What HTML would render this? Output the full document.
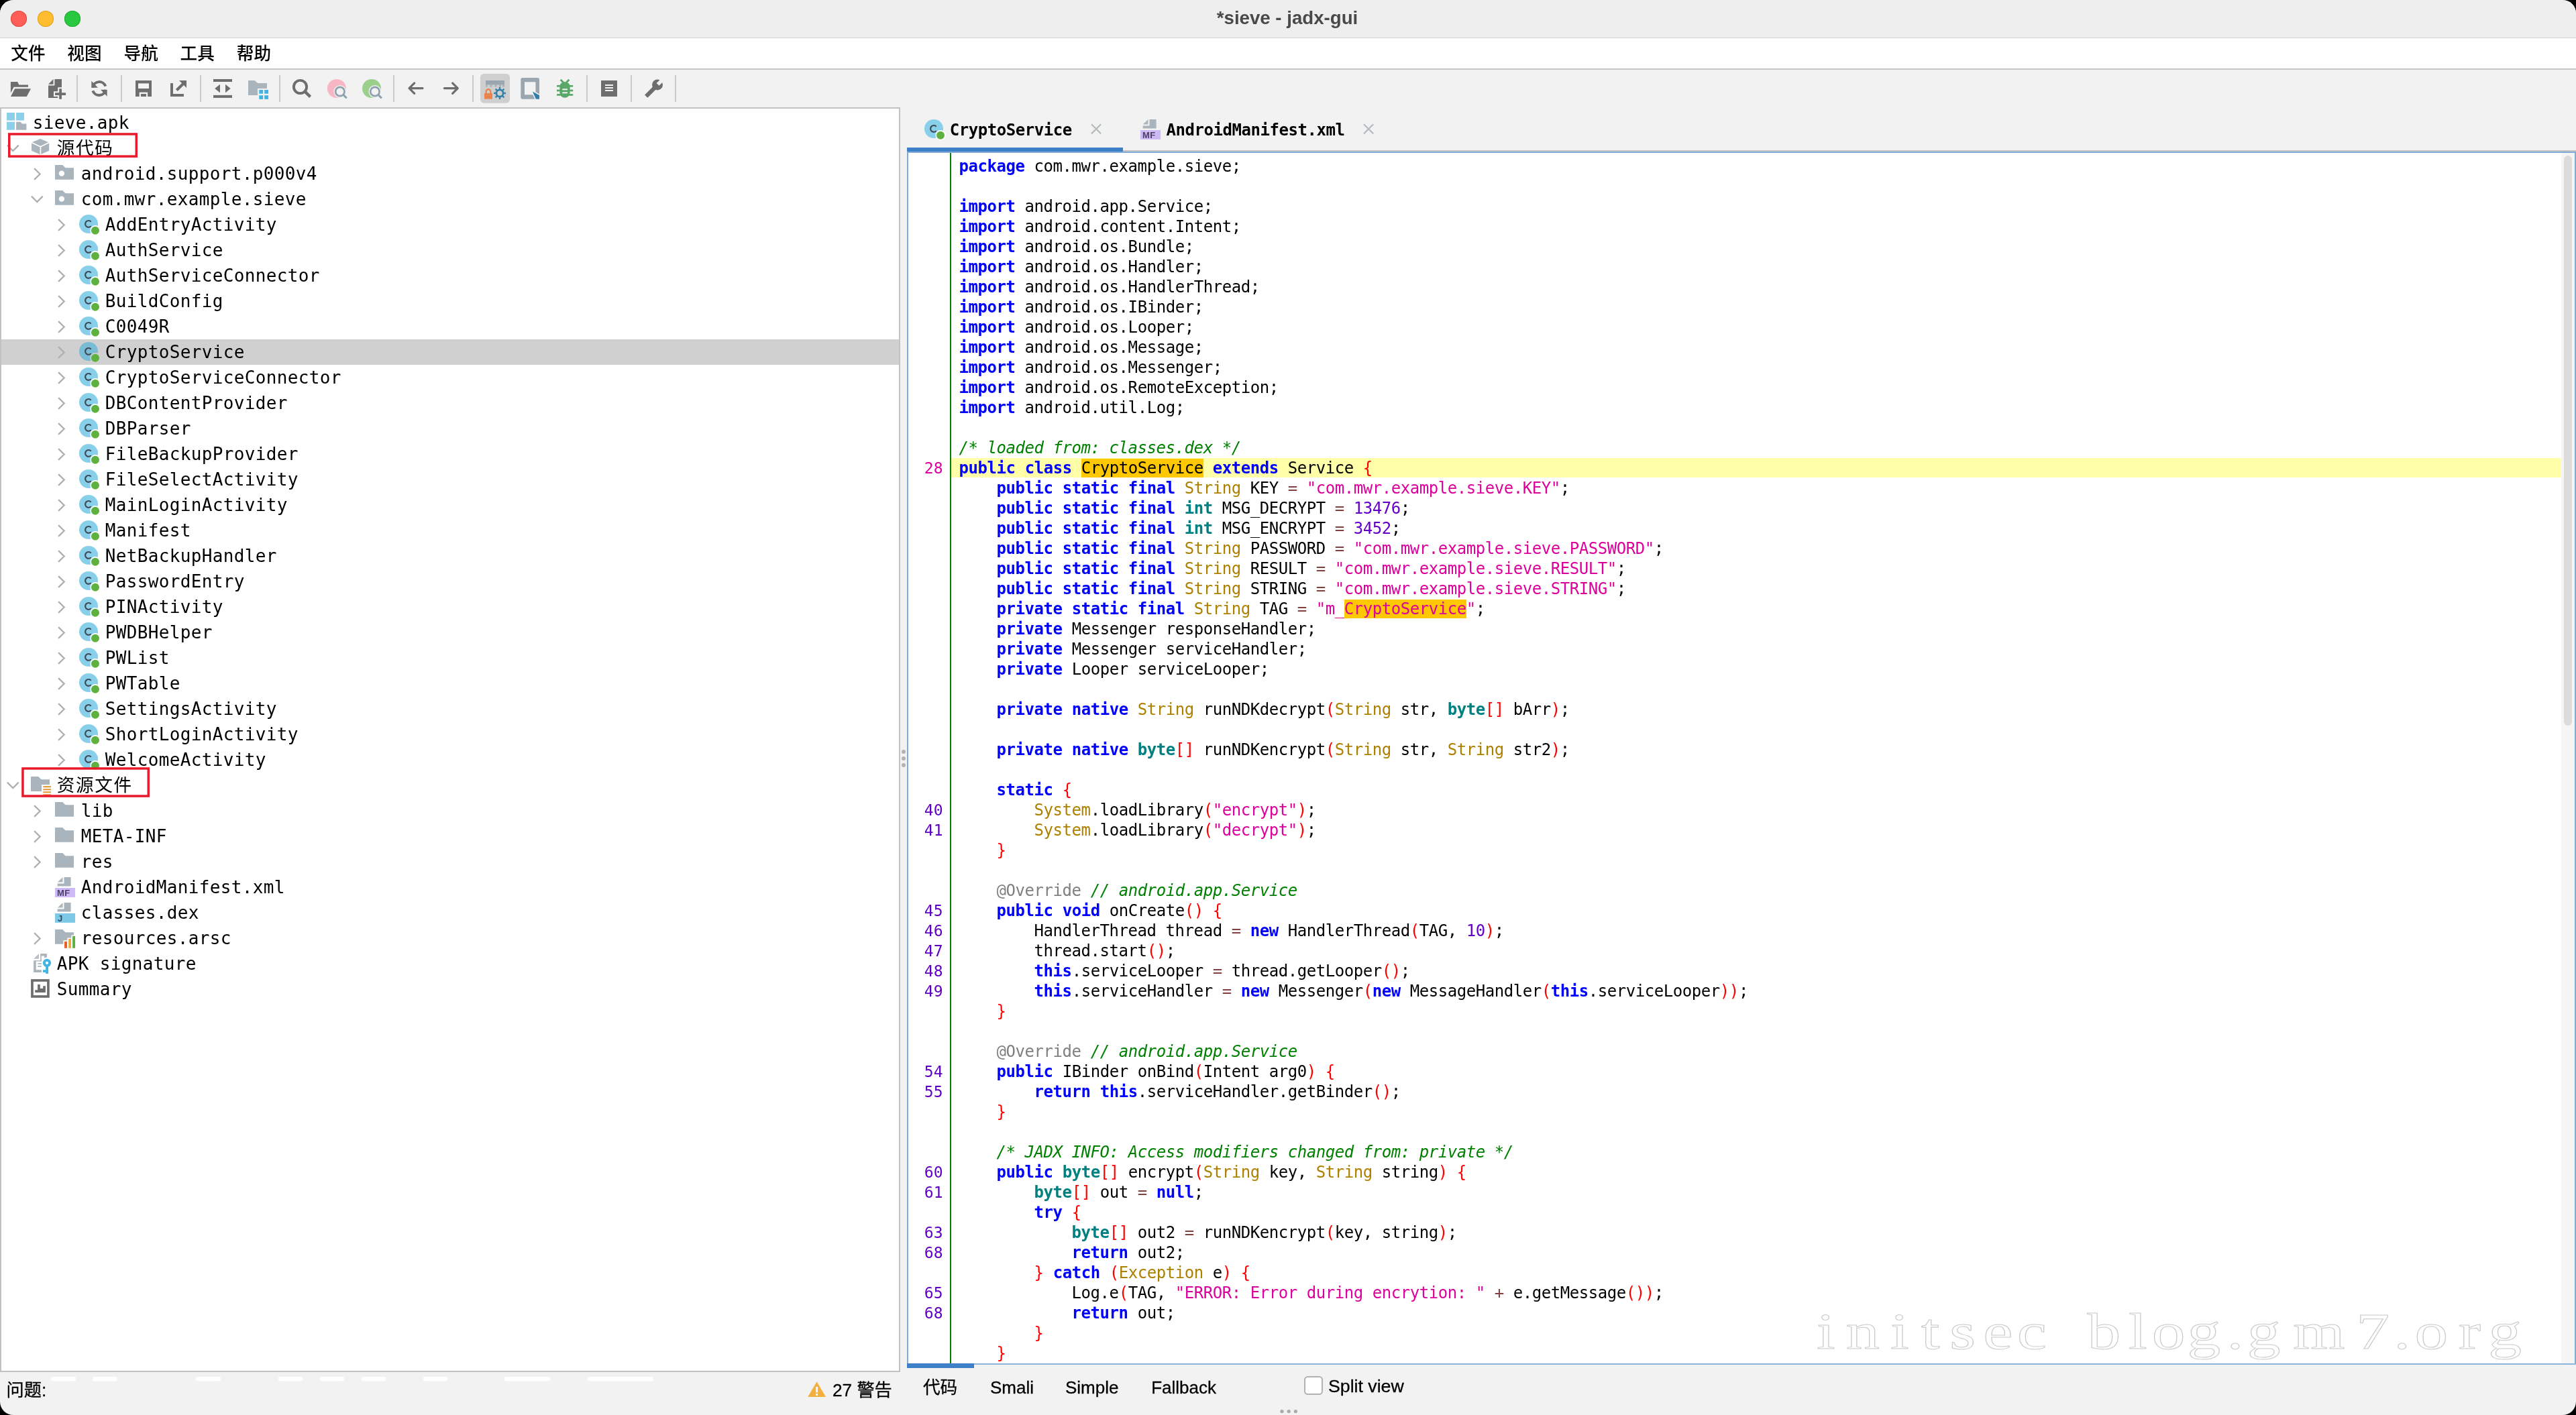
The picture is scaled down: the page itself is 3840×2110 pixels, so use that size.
<!DOCTYPE html>
<html lang="zh-CN"><head><meta charset="utf-8"><title>*sieve - jadx-gui</title>
<style>
*{box-sizing:border-box;margin:0;padding:0}
html,body{width:3840px;height:2110px;background:#000;overflow:hidden}
body{position:relative;font-family:"Liberation Sans","Noto Sans CJK SC",sans-serif;color:#000}
.win{position:absolute;left:0;top:0;width:3840px;height:2110px;background:#f2f2f2;border-radius:20px;overflow:hidden;transform:translateZ(0);will-change:transform;backface-visibility:hidden}
.abs{position:absolute}
.title{position:absolute;left:0;top:0;width:3840px;height:56px;background:#eeeeee}
.titleline{position:absolute;left:0;top:56px;width:3840px;height:1px;background:#d2d2d2}
.ttext{position:absolute;left:-1px;width:3840px;top:9.1px;height:36px;line-height:36px;text-align:center;font-weight:bold;font-size:27.65px;color:#494949}
.tl{position:absolute;top:15.8px;width:24px;height:24px;border-radius:50%}
.menu{position:absolute;left:0;top:57px;width:3840px;height:45.2px;background:#fff}
.menuline{position:absolute;left:0;top:102.2px;width:3840px;height:1.8px;background:#c6c6c6}
.mi{position:absolute;top:59.7px;height:40px;line-height:40px;font-size:25.6px;font-weight:500;font-family:"Liberation Sans","Noto Sans CJK SC",sans-serif;white-space:nowrap}
.tsep{position:absolute;top:112px;width:1.8px;height:40px;background:#cbcbcb}
.tree{position:absolute;left:0;top:160px;width:1342px;height:1886px;background:#fff;border:2px solid #c2c2c2}
.row{position:absolute;left:2px;width:1338px;height:38px}
.rt{position:absolute;top:0;height:38px;line-height:38px;font-family:"DejaVu Sans Mono","Liberation Mono","Noto Sans CJK SC",monospace;font-size:26px;letter-spacing:0.347px;white-space:pre}
.rt.cj{letter-spacing:1.7px;font-size:26.6px}
.ic{position:absolute;overflow:visible}
.ed{position:absolute;left:1352px;top:226px;width:2488px;height:1808.5px;background:#fff}
.cl{position:absolute;left:1429.6px;height:30px;line-height:30px;font-family:"DejaVu Sans Mono","Liberation Mono",monospace;font-size:24px;letter-spacing:-0.448px;white-space:pre;color:#000}
.ln{position:absolute;left:1356.7px;width:49.2px;text-align:right;height:30px;line-height:30px;font-family:"DejaVu Sans Mono","Liberation Mono",monospace;font-size:23px;letter-spacing:0.154px;color:#6000c4;white-space:pre}
.k{color:#0000ff;font-weight:bold}
.d{color:#008080;font-weight:bold}
.f{color:#ad8000}
.s{color:#dc009c}
.n{color:#6400c8}
.o{color:#804040}
.p{color:#ff0000}
.c{color:#008000;font-style:italic}
.a{color:#808080}
.m{background:#ffc800}
.tab{position:absolute;top:176px;height:36px;line-height:36px;font-family:"DejaVu Sans Mono","Liberation Mono",monospace;font-weight:bold;font-size:24px;letter-spacing:-0.448px;white-space:pre;color:#000}
.bt{position:absolute;top:2048px;height:40px;line-height:40px;font-size:26px;white-space:nowrap;font-family:"Liberation Sans","Noto Sans CJK SC",sans-serif;-webkit-text-stroke:0.3px #000}
</style></head><body>
<div class="win">
<div class="title"></div><div class="titleline"></div>
<div class="tl" style="left:15.8px;background:#ff5f57;box-shadow:inset 0 0 0 1px #e2463f"></div>
<div class="tl" style="left:55.8px;background:#febc2e;box-shadow:inset 0 0 0 1px #dfa023"></div>
<div class="tl" style="left:96px;background:#28c840;box-shadow:inset 0 0 0 1px #1eab2f"></div>
<div class="ttext">*sieve - jadx-gui</div>
<div class="menu"></div><div class="menuline"></div>
<div class="mi" style="left:16.3px">文件</div>
<div class="mi" style="left:100.3px">视图</div>
<div class="mi" style="left:184.6px">导航</div>
<div class="mi" style="left:268.6px">工具</div>
<div class="mi" style="left:352.8px">帮助</div>
<svg class="abs" style="left:0;top:104px" width="1100" height="58" viewBox="0 104 1100 58">
<rect x="716" y="110" width="44" height="43.7" rx="5.5" fill="#cfcfcf"/>
<path fill="#6e6e6e" d="M15.9,122H26.1L28.4,126.4H42V129.8H20.6L15.9,138.8Z"/>
<path fill="#6e6e6e" d="M22.1,132.3H46L39.8,144H15.9Z"/>
<path fill="#6e6e6e" d="M81.4,118H92V145.9H72V127.6H81.4Z"/>
<path fill="#6e6e6e" d="M72,125.7L79.5,118V125.7Z"/>
<path fill="#f2f2f2" d="M86.2,130.3H94V136.2H100V143.9H94V150H86.2V143.9H80V136.2H86.2Z"/>
<path fill="#6e6e6e" d="M88.2,132.3H92V138.2H98.1V141.9H92V147.7H88.2V141.9H82V138.2H88.2Z"/>
<path fill="none" stroke="#6e6e6e" stroke-width="4" d="M138.2,130.5A9.9,9.9 0 0 1 157.3,128.6"/>
<path fill="none" stroke="#6e6e6e" stroke-width="4" d="M157.4,133.8A9.9,9.9 0 0 1 138.3,135.4"/>
<path fill="#6e6e6e" d="M136.3,120.8V130.7H146Z"/>
<path fill="#6e6e6e" d="M159.6,143.8V133.8H150Z"/>
<rect x="202" y="120" width="24" height="24" fill="#6e6e6e"/>
<rect x="206" y="124.4" width="16" height="7.6" fill="#f2f2f2"/>
<rect x="207.7" y="137.6" width="12.4" height="6.6" fill="#f2f2f2"/>
<rect x="210" y="140" width="8" height="4" fill="#6e6e6e"/>
<path fill="#6e6e6e" d="M254,124H258V140H274V144H254Z"/>
<path fill="none" stroke="#6e6e6e" stroke-width="4.2" d="M263.4,134.6L274.5,123.5"/>
<path fill="#6e6e6e" d="M267,120H278V131Z"/>
<rect x="318" y="118" width="28" height="4" fill="#6e6e6e"/>
<rect x="318" y="141.9" width="28" height="4" fill="#6e6e6e"/>
<path fill="#6e6e6e" d="M320.1,132L328,125.7V138.3Z"/>
<path fill="#6e6e6e" d="M343.7,132L336,125.7V138.3Z"/>
<path fill="#a9b4bc" d="M370,120H379.5L384.5,124H398V132H384V142H370Z"/>
<rect x="386.3" y="134" width="5.8" height="5.7" fill="#3fb2e3"/>
<rect x="394.2" y="134" width="5.8" height="5.7" fill="#3fb2e3"/>
<rect x="386.3" y="142.2" width="5.8" height="5.7" fill="#3fb2e3"/>
<rect x="394.2" y="142.2" width="5.8" height="5.7" fill="#3fb2e3"/>
<circle cx="447.5" cy="129.5" r="9.6" fill="none" stroke="#6e6e6e" stroke-width="3.9"/>
<path fill="none" stroke="#6e6e6e" stroke-width="4.4" d="M454.6,136.6L462.6,144.4"/>
<circle cx="501.9" cy="132" r="14" fill="#f7b6c3"/>
<circle cx="506.79999999999995" cy="136.5" r="9.4" fill="#f2f2f2"/>
<path fill="none" stroke="#f2f2f2" stroke-width="6.5" d="M510.9,141L517.4,147.2"/>
<circle cx="506.79999999999995" cy="136.5" r="6.7" fill="none" stroke="#8fa1ae" stroke-width="2.7"/>
<path fill="none" stroke="#8fa1ae" stroke-width="3" d="M511.5,141.2L516.8,146.3"/>
<circle cx="554.0" cy="132" r="14" fill="#9bd08c"/>
<circle cx="558.9" cy="136.5" r="9.4" fill="#f2f2f2"/>
<path fill="none" stroke="#f2f2f2" stroke-width="6.5" d="M563.0,141L569.5,147.2"/>
<circle cx="558.9" cy="136.5" r="6.7" fill="none" stroke="#8fa1ae" stroke-width="2.7"/>
<path fill="none" stroke="#8fa1ae" stroke-width="3" d="M563.6,141.2L568.9,146.3"/>
<path fill="none" stroke="#6e6e6e" stroke-width="3.2" stroke-linecap="round" stroke-linejoin="round" d="M630,131.6H610.4M617.7,123.9L610,131.6L617.7,139.3"/>
<path fill="none" stroke="#6e6e6e" stroke-width="3.2" stroke-linecap="round" stroke-linejoin="round" d="M662.4,131.6H682M674.6,123.9L682.3,131.6L674.6,139.3"/>
<rect x="724" y="120" width="28" height="6.4" fill="#9aa7b0"/>
<rect x="724" y="126.4" width="3" height="3.2" fill="#9aa7b0" opacity="0.75"/>
<rect x="730.5" y="126.4" width="3" height="3.2" fill="#9aa7b0" opacity="0.75"/>
<rect x="737.5" y="126.4" width="3" height="3.2" fill="#9aa7b0" opacity="0.75"/>
<rect x="744" y="126.4" width="3" height="3.2" fill="#9aa7b0" opacity="0.75"/>
<rect x="749" y="126.4" width="3" height="3.2" fill="#9aa7b0" opacity="0.75"/>
<rect x="722" y="139" width="12" height="8.7" fill="#e8834f"/>
<path fill="none" stroke="#e8834f" stroke-width="2.3" d="M724.7,139.5V136.4A3.3,3.3 0 0 1 731.3,136.4V139.5"/>
<circle cx="745" cy="139" r="5.1" fill="none" stroke="#2f7fa8" stroke-width="2.7"/>
<path stroke="#2f7fa8" stroke-width="2.4" d="M751.2,139.0L754.0,139.0"/>
<path stroke="#2f7fa8" stroke-width="2.4" d="M749.4,143.4L751.4,145.4"/>
<path stroke="#2f7fa8" stroke-width="2.4" d="M745.0,145.2L745.0,148.0"/>
<path stroke="#2f7fa8" stroke-width="2.4" d="M740.6,143.4L738.6,145.4"/>
<path stroke="#2f7fa8" stroke-width="2.4" d="M738.8,139.0L736.0,139.0"/>
<path stroke="#2f7fa8" stroke-width="2.4" d="M740.6,134.6L738.6,132.6"/>
<path stroke="#2f7fa8" stroke-width="2.4" d="M745.0,132.8L745.0,130.0"/>
<path stroke="#2f7fa8" stroke-width="2.4" d="M749.4,134.6L751.4,132.6"/>
<rect x="776.3" y="116" width="27.7" height="31.7" rx="2.5" fill="#9aa7b0"/>
<rect x="782" y="122.3" width="16.4" height="19" fill="#f2f2f2"/>
<path fill="#f2f2f2" stroke="#f2f2f2" stroke-width="3" d="M793.9,136.5L804,141.9V147.7H798.9Z"/>
<path fill="#2f7fa8" d="M793.9,136.5L804,141.9V147.7H798.9Z"/>
<path fill="none" stroke="#59a869" stroke-width="2.8" d="M835.6,118.7L840.8,123.9M848.4,118.7L843.2,123.9"/>
<path fill="#59a869" d="M834.4,128.6A7.6,6.4 0 0 1 849.6,128.6V138.2A7.6,7.6 0 0 1 834.4,138.2Z"/>
<rect x="830" y="126.95000000000002" width="24.2" height="2.7" fill="#59a869"/>
<rect x="830" y="133.65" width="24.2" height="2.7" fill="#59a869"/>
<rect x="830" y="140.05" width="24.2" height="2.7" fill="#59a869"/>
<rect x="838.3" y="132.3" width="7.6" height="2" fill="#f2f2f2"/>
<rect x="838.3" y="137.3" width="7.6" height="2" fill="#f2f2f2"/>
<rect x="896" y="120" width="24" height="24" fill="#6e6e6e"/>
<rect x="902" y="126" width="12" height="2" fill="#f2f2f2"/>
<rect x="902" y="130" width="12" height="2" fill="#f2f2f2"/>
<rect x="902" y="134" width="12" height="2" fill="#f2f2f2"/>
<path fill="none" stroke="#6e6e6e" stroke-width="6.1" d="M963.2,143.7L977.5,129.4"/>
<circle cx="980" cy="126.4" r="8" fill="#6e6e6e"/>
<path fill="none" stroke="#f2f2f2" stroke-width="5.4" d="M980.6,125.8L990,116.4"/>
</svg>
<div class="tsep" style="left:114.2px"></div>
<div class="tsep" style="left:180.2px"></div>
<div class="tsep" style="left:298.2px"></div>
<div class="tsep" style="left:416.2px"></div>
<div class="tsep" style="left:586.2px"></div>
<div class="tsep" style="left:704.2px"></div>
<div class="tsep" style="left:874.2px"></div>
<div class="tsep" style="left:940.2px"></div>
<div class="tsep" style="left:1006.3px"></div>
<div class="tree"></div>
<svg class="ic" style="left:9.9px;top:168.2px" width="30" height="26" viewBox="0 0 30 26"><rect x="0" y="0" width="12" height="11.6" fill="#8bcfe9"/><rect x="14.1" y="0" width="11.8" height="11.6" fill="#8bcfe9"/><rect x="0" y="13.7" width="12" height="12" fill="#8bcfe9"/><path fill="#a9b4bc" d="M14.1,13.7H20.5L23,16.5H29.4V25.7H14.1Z"/></svg>
<div class="rt" style="left:48.7px;top:164px">sieve.apk</div>
<svg class="ic" style="left:7.699999999999999px;top:213.2px" width="24" height="16" viewBox="0 0 24 16"><path fill="none" stroke="#b0b0b0" stroke-width="2.35" d="M2.9,3.7L11.3,12.1L19.7,3.7"/></svg>
<svg class="ic" style="left:47px;top:207.3px" width="27" height="24" viewBox="0 0 27 24"><path fill="#a9b4bc" d="M13.1,0L26.2,5.6V17.8L13.1,23.4L0,17.8V5.6Z"/><path fill="none" stroke="#fff" stroke-width="1.7" d="M0,5.6L13.4,11.8L26.2,5.6M13.4,11.8V23.4"/></svg>
<div class="rt cj" style="left:84.7px;top:202px">源代码</div>
<svg class="ic" style="left:47.7px;top:247.5px" width="16" height="24" viewBox="0 0 16 24"><path fill="none" stroke="#b0b0b0" stroke-width="2.35" d="M3.1,3.2L11.6,11.5L3.1,19.8"/></svg>
<svg class="ic" style="left:82px;top:246px" width="28" height="22" viewBox="0 0 28 22"><path fill="#a9b4bc" d="M0,0H11.3L15.5,4.2H28V21.8H0Z"/><circle cx="9.9" cy="12.6" r="4.2" fill="#fff"/></svg>
<div class="rt" style="left:120.7px;top:240px">android.support.p000v4</div>
<svg class="ic" style="left:43.7px;top:289.2px" width="24" height="16" viewBox="0 0 24 16"><path fill="none" stroke="#b0b0b0" stroke-width="2.35" d="M2.9,3.7L11.3,12.1L19.7,3.7"/></svg>
<svg class="ic" style="left:82px;top:284px" width="28" height="22" viewBox="0 0 28 22"><path fill="#a9b4bc" d="M0,0H11.3L15.5,4.2H28V21.8H0Z"/><circle cx="9.9" cy="12.6" r="4.2" fill="#fff"/></svg>
<div class="rt" style="left:120.7px;top:278px">com.mwr.example.sieve</div>
<svg class="ic" style="left:83.7px;top:323.5px" width="16" height="24" viewBox="0 0 16 24"><path fill="none" stroke="#b0b0b0" stroke-width="2.35" d="M3.1,3.2L11.6,11.5L3.1,19.8"/></svg>
<svg class="ic" style="left:118px;top:320px" width="32" height="32" viewBox="0 0 32 32"><circle cx="14" cy="14" r="14" fill="#88cfea"/><path fill="none" stroke="#3d4a55" stroke-width="2.15" d="M17.7,10.7A4.9,4.9 0 1 0 17.7,17.1"/><circle cx="24" cy="23.7" r="7.6" fill="#fff"/><circle cx="24" cy="23.7" r="6" fill="#5fb13f"/></svg>
<div class="rt" style="left:156.7px;top:316px">AddEntryActivity</div>
<svg class="ic" style="left:83.7px;top:361.5px" width="16" height="24" viewBox="0 0 16 24"><path fill="none" stroke="#b0b0b0" stroke-width="2.35" d="M3.1,3.2L11.6,11.5L3.1,19.8"/></svg>
<svg class="ic" style="left:118px;top:358px" width="32" height="32" viewBox="0 0 32 32"><circle cx="14" cy="14" r="14" fill="#88cfea"/><path fill="none" stroke="#3d4a55" stroke-width="2.15" d="M17.7,10.7A4.9,4.9 0 1 0 17.7,17.1"/><circle cx="24" cy="23.7" r="7.6" fill="#fff"/><circle cx="24" cy="23.7" r="6" fill="#5fb13f"/></svg>
<div class="rt" style="left:156.7px;top:354px">AuthService</div>
<svg class="ic" style="left:83.7px;top:399.5px" width="16" height="24" viewBox="0 0 16 24"><path fill="none" stroke="#b0b0b0" stroke-width="2.35" d="M3.1,3.2L11.6,11.5L3.1,19.8"/></svg>
<svg class="ic" style="left:118px;top:396px" width="32" height="32" viewBox="0 0 32 32"><circle cx="14" cy="14" r="14" fill="#88cfea"/><path fill="none" stroke="#3d4a55" stroke-width="2.15" d="M17.7,10.7A4.9,4.9 0 1 0 17.7,17.1"/><circle cx="24" cy="23.7" r="7.6" fill="#fff"/><circle cx="24" cy="23.7" r="6" fill="#5fb13f"/></svg>
<div class="rt" style="left:156.7px;top:392px">AuthServiceConnector</div>
<svg class="ic" style="left:83.7px;top:437.5px" width="16" height="24" viewBox="0 0 16 24"><path fill="none" stroke="#b0b0b0" stroke-width="2.35" d="M3.1,3.2L11.6,11.5L3.1,19.8"/></svg>
<svg class="ic" style="left:118px;top:434px" width="32" height="32" viewBox="0 0 32 32"><circle cx="14" cy="14" r="14" fill="#88cfea"/><path fill="none" stroke="#3d4a55" stroke-width="2.15" d="M17.7,10.7A4.9,4.9 0 1 0 17.7,17.1"/><circle cx="24" cy="23.7" r="7.6" fill="#fff"/><circle cx="24" cy="23.7" r="6" fill="#5fb13f"/></svg>
<div class="rt" style="left:156.7px;top:430px">BuildConfig</div>
<svg class="ic" style="left:83.7px;top:475.5px" width="16" height="24" viewBox="0 0 16 24"><path fill="none" stroke="#b0b0b0" stroke-width="2.35" d="M3.1,3.2L11.6,11.5L3.1,19.8"/></svg>
<svg class="ic" style="left:118px;top:472px" width="32" height="32" viewBox="0 0 32 32"><circle cx="14" cy="14" r="14" fill="#88cfea"/><path fill="none" stroke="#3d4a55" stroke-width="2.15" d="M17.7,10.7A4.9,4.9 0 1 0 17.7,17.1"/><circle cx="24" cy="23.7" r="7.6" fill="#fff"/><circle cx="24" cy="23.7" r="6" fill="#5fb13f"/></svg>
<div class="rt" style="left:156.7px;top:468px">C0049R</div>
<div class="abs" style="left:2px;top:506px;width:1338px;height:38px;background:#d0d0d0"></div>
<svg class="ic" style="left:83.7px;top:513.5px" width="16" height="24" viewBox="0 0 16 24"><path fill="none" stroke="#b0b0b0" stroke-width="2.35" d="M3.1,3.2L11.6,11.5L3.1,19.8"/></svg>
<svg class="ic" style="left:118px;top:510px" width="32" height="32" viewBox="0 0 32 32"><circle cx="14" cy="14" r="14" fill="#79bcd6"/><path fill="none" stroke="#3d4a55" stroke-width="2.15" d="M17.7,10.7A4.9,4.9 0 1 0 17.7,17.1"/><circle cx="24" cy="23.7" r="7.6" fill="#d0d0d0"/><circle cx="24" cy="23.7" r="6" fill="#5fb13f"/></svg>
<div class="rt" style="left:156.7px;top:506px">CryptoService</div>
<svg class="ic" style="left:83.7px;top:551.5px" width="16" height="24" viewBox="0 0 16 24"><path fill="none" stroke="#b0b0b0" stroke-width="2.35" d="M3.1,3.2L11.6,11.5L3.1,19.8"/></svg>
<svg class="ic" style="left:118px;top:548px" width="32" height="32" viewBox="0 0 32 32"><circle cx="14" cy="14" r="14" fill="#88cfea"/><path fill="none" stroke="#3d4a55" stroke-width="2.15" d="M17.7,10.7A4.9,4.9 0 1 0 17.7,17.1"/><circle cx="24" cy="23.7" r="7.6" fill="#fff"/><circle cx="24" cy="23.7" r="6" fill="#5fb13f"/></svg>
<div class="rt" style="left:156.7px;top:544px">CryptoServiceConnector</div>
<svg class="ic" style="left:83.7px;top:589.5px" width="16" height="24" viewBox="0 0 16 24"><path fill="none" stroke="#b0b0b0" stroke-width="2.35" d="M3.1,3.2L11.6,11.5L3.1,19.8"/></svg>
<svg class="ic" style="left:118px;top:586px" width="32" height="32" viewBox="0 0 32 32"><circle cx="14" cy="14" r="14" fill="#88cfea"/><path fill="none" stroke="#3d4a55" stroke-width="2.15" d="M17.7,10.7A4.9,4.9 0 1 0 17.7,17.1"/><circle cx="24" cy="23.7" r="7.6" fill="#fff"/><circle cx="24" cy="23.7" r="6" fill="#5fb13f"/></svg>
<div class="rt" style="left:156.7px;top:582px">DBContentProvider</div>
<svg class="ic" style="left:83.7px;top:627.5px" width="16" height="24" viewBox="0 0 16 24"><path fill="none" stroke="#b0b0b0" stroke-width="2.35" d="M3.1,3.2L11.6,11.5L3.1,19.8"/></svg>
<svg class="ic" style="left:118px;top:624px" width="32" height="32" viewBox="0 0 32 32"><circle cx="14" cy="14" r="14" fill="#88cfea"/><path fill="none" stroke="#3d4a55" stroke-width="2.15" d="M17.7,10.7A4.9,4.9 0 1 0 17.7,17.1"/><circle cx="24" cy="23.7" r="7.6" fill="#fff"/><circle cx="24" cy="23.7" r="6" fill="#5fb13f"/></svg>
<div class="rt" style="left:156.7px;top:620px">DBParser</div>
<svg class="ic" style="left:83.7px;top:665.5px" width="16" height="24" viewBox="0 0 16 24"><path fill="none" stroke="#b0b0b0" stroke-width="2.35" d="M3.1,3.2L11.6,11.5L3.1,19.8"/></svg>
<svg class="ic" style="left:118px;top:662px" width="32" height="32" viewBox="0 0 32 32"><circle cx="14" cy="14" r="14" fill="#88cfea"/><path fill="none" stroke="#3d4a55" stroke-width="2.15" d="M17.7,10.7A4.9,4.9 0 1 0 17.7,17.1"/><circle cx="24" cy="23.7" r="7.6" fill="#fff"/><circle cx="24" cy="23.7" r="6" fill="#5fb13f"/></svg>
<div class="rt" style="left:156.7px;top:658px">FileBackupProvider</div>
<svg class="ic" style="left:83.7px;top:703.5px" width="16" height="24" viewBox="0 0 16 24"><path fill="none" stroke="#b0b0b0" stroke-width="2.35" d="M3.1,3.2L11.6,11.5L3.1,19.8"/></svg>
<svg class="ic" style="left:118px;top:700px" width="32" height="32" viewBox="0 0 32 32"><circle cx="14" cy="14" r="14" fill="#88cfea"/><path fill="none" stroke="#3d4a55" stroke-width="2.15" d="M17.7,10.7A4.9,4.9 0 1 0 17.7,17.1"/><circle cx="24" cy="23.7" r="7.6" fill="#fff"/><circle cx="24" cy="23.7" r="6" fill="#5fb13f"/></svg>
<div class="rt" style="left:156.7px;top:696px">FileSelectActivity</div>
<svg class="ic" style="left:83.7px;top:741.5px" width="16" height="24" viewBox="0 0 16 24"><path fill="none" stroke="#b0b0b0" stroke-width="2.35" d="M3.1,3.2L11.6,11.5L3.1,19.8"/></svg>
<svg class="ic" style="left:118px;top:738px" width="32" height="32" viewBox="0 0 32 32"><circle cx="14" cy="14" r="14" fill="#88cfea"/><path fill="none" stroke="#3d4a55" stroke-width="2.15" d="M17.7,10.7A4.9,4.9 0 1 0 17.7,17.1"/><circle cx="24" cy="23.7" r="7.6" fill="#fff"/><circle cx="24" cy="23.7" r="6" fill="#5fb13f"/></svg>
<div class="rt" style="left:156.7px;top:734px">MainLoginActivity</div>
<svg class="ic" style="left:83.7px;top:779.5px" width="16" height="24" viewBox="0 0 16 24"><path fill="none" stroke="#b0b0b0" stroke-width="2.35" d="M3.1,3.2L11.6,11.5L3.1,19.8"/></svg>
<svg class="ic" style="left:118px;top:776px" width="32" height="32" viewBox="0 0 32 32"><circle cx="14" cy="14" r="14" fill="#88cfea"/><path fill="none" stroke="#3d4a55" stroke-width="2.15" d="M17.7,10.7A4.9,4.9 0 1 0 17.7,17.1"/><circle cx="24" cy="23.7" r="7.6" fill="#fff"/><circle cx="24" cy="23.7" r="6" fill="#5fb13f"/></svg>
<div class="rt" style="left:156.7px;top:772px">Manifest</div>
<svg class="ic" style="left:83.7px;top:817.5px" width="16" height="24" viewBox="0 0 16 24"><path fill="none" stroke="#b0b0b0" stroke-width="2.35" d="M3.1,3.2L11.6,11.5L3.1,19.8"/></svg>
<svg class="ic" style="left:118px;top:814px" width="32" height="32" viewBox="0 0 32 32"><circle cx="14" cy="14" r="14" fill="#88cfea"/><path fill="none" stroke="#3d4a55" stroke-width="2.15" d="M17.7,10.7A4.9,4.9 0 1 0 17.7,17.1"/><circle cx="24" cy="23.7" r="7.6" fill="#fff"/><circle cx="24" cy="23.7" r="6" fill="#5fb13f"/></svg>
<div class="rt" style="left:156.7px;top:810px">NetBackupHandler</div>
<svg class="ic" style="left:83.7px;top:855.5px" width="16" height="24" viewBox="0 0 16 24"><path fill="none" stroke="#b0b0b0" stroke-width="2.35" d="M3.1,3.2L11.6,11.5L3.1,19.8"/></svg>
<svg class="ic" style="left:118px;top:852px" width="32" height="32" viewBox="0 0 32 32"><circle cx="14" cy="14" r="14" fill="#88cfea"/><path fill="none" stroke="#3d4a55" stroke-width="2.15" d="M17.7,10.7A4.9,4.9 0 1 0 17.7,17.1"/><circle cx="24" cy="23.7" r="7.6" fill="#fff"/><circle cx="24" cy="23.7" r="6" fill="#5fb13f"/></svg>
<div class="rt" style="left:156.7px;top:848px">PasswordEntry</div>
<svg class="ic" style="left:83.7px;top:893.5px" width="16" height="24" viewBox="0 0 16 24"><path fill="none" stroke="#b0b0b0" stroke-width="2.35" d="M3.1,3.2L11.6,11.5L3.1,19.8"/></svg>
<svg class="ic" style="left:118px;top:890px" width="32" height="32" viewBox="0 0 32 32"><circle cx="14" cy="14" r="14" fill="#88cfea"/><path fill="none" stroke="#3d4a55" stroke-width="2.15" d="M17.7,10.7A4.9,4.9 0 1 0 17.7,17.1"/><circle cx="24" cy="23.7" r="7.6" fill="#fff"/><circle cx="24" cy="23.7" r="6" fill="#5fb13f"/></svg>
<div class="rt" style="left:156.7px;top:886px">PINActivity</div>
<svg class="ic" style="left:83.7px;top:931.5px" width="16" height="24" viewBox="0 0 16 24"><path fill="none" stroke="#b0b0b0" stroke-width="2.35" d="M3.1,3.2L11.6,11.5L3.1,19.8"/></svg>
<svg class="ic" style="left:118px;top:928px" width="32" height="32" viewBox="0 0 32 32"><circle cx="14" cy="14" r="14" fill="#88cfea"/><path fill="none" stroke="#3d4a55" stroke-width="2.15" d="M17.7,10.7A4.9,4.9 0 1 0 17.7,17.1"/><circle cx="24" cy="23.7" r="7.6" fill="#fff"/><circle cx="24" cy="23.7" r="6" fill="#5fb13f"/></svg>
<div class="rt" style="left:156.7px;top:924px">PWDBHelper</div>
<svg class="ic" style="left:83.7px;top:969.5px" width="16" height="24" viewBox="0 0 16 24"><path fill="none" stroke="#b0b0b0" stroke-width="2.35" d="M3.1,3.2L11.6,11.5L3.1,19.8"/></svg>
<svg class="ic" style="left:118px;top:966px" width="32" height="32" viewBox="0 0 32 32"><circle cx="14" cy="14" r="14" fill="#88cfea"/><path fill="none" stroke="#3d4a55" stroke-width="2.15" d="M17.7,10.7A4.9,4.9 0 1 0 17.7,17.1"/><circle cx="24" cy="23.7" r="7.6" fill="#fff"/><circle cx="24" cy="23.7" r="6" fill="#5fb13f"/></svg>
<div class="rt" style="left:156.7px;top:962px">PWList</div>
<svg class="ic" style="left:83.7px;top:1007.5px" width="16" height="24" viewBox="0 0 16 24"><path fill="none" stroke="#b0b0b0" stroke-width="2.35" d="M3.1,3.2L11.6,11.5L3.1,19.8"/></svg>
<svg class="ic" style="left:118px;top:1004px" width="32" height="32" viewBox="0 0 32 32"><circle cx="14" cy="14" r="14" fill="#88cfea"/><path fill="none" stroke="#3d4a55" stroke-width="2.15" d="M17.7,10.7A4.9,4.9 0 1 0 17.7,17.1"/><circle cx="24" cy="23.7" r="7.6" fill="#fff"/><circle cx="24" cy="23.7" r="6" fill="#5fb13f"/></svg>
<div class="rt" style="left:156.7px;top:1000px">PWTable</div>
<svg class="ic" style="left:83.7px;top:1045.5px" width="16" height="24" viewBox="0 0 16 24"><path fill="none" stroke="#b0b0b0" stroke-width="2.35" d="M3.1,3.2L11.6,11.5L3.1,19.8"/></svg>
<svg class="ic" style="left:118px;top:1042px" width="32" height="32" viewBox="0 0 32 32"><circle cx="14" cy="14" r="14" fill="#88cfea"/><path fill="none" stroke="#3d4a55" stroke-width="2.15" d="M17.7,10.7A4.9,4.9 0 1 0 17.7,17.1"/><circle cx="24" cy="23.7" r="7.6" fill="#fff"/><circle cx="24" cy="23.7" r="6" fill="#5fb13f"/></svg>
<div class="rt" style="left:156.7px;top:1038px">SettingsActivity</div>
<svg class="ic" style="left:83.7px;top:1083.5px" width="16" height="24" viewBox="0 0 16 24"><path fill="none" stroke="#b0b0b0" stroke-width="2.35" d="M3.1,3.2L11.6,11.5L3.1,19.8"/></svg>
<svg class="ic" style="left:118px;top:1080px" width="32" height="32" viewBox="0 0 32 32"><circle cx="14" cy="14" r="14" fill="#88cfea"/><path fill="none" stroke="#3d4a55" stroke-width="2.15" d="M17.7,10.7A4.9,4.9 0 1 0 17.7,17.1"/><circle cx="24" cy="23.7" r="7.6" fill="#fff"/><circle cx="24" cy="23.7" r="6" fill="#5fb13f"/></svg>
<div class="rt" style="left:156.7px;top:1076px">ShortLoginActivity</div>
<svg class="ic" style="left:83.7px;top:1121.5px" width="16" height="24" viewBox="0 0 16 24"><path fill="none" stroke="#b0b0b0" stroke-width="2.35" d="M3.1,3.2L11.6,11.5L3.1,19.8"/></svg>
<svg class="ic" style="left:118px;top:1118px" width="32" height="32" viewBox="0 0 32 32"><circle cx="14" cy="14" r="14" fill="#88cfea"/><path fill="none" stroke="#3d4a55" stroke-width="2.15" d="M17.7,10.7A4.9,4.9 0 1 0 17.7,17.1"/><circle cx="24" cy="23.7" r="7.6" fill="#fff"/><circle cx="24" cy="23.7" r="6" fill="#5fb13f"/></svg>
<div class="rt" style="left:156.7px;top:1114px">WelcomeActivity</div>
<svg class="ic" style="left:7.699999999999999px;top:1163.2px" width="24" height="16" viewBox="0 0 24 16"><path fill="none" stroke="#b0b0b0" stroke-width="2.35" d="M2.9,3.7L11.3,12.1L19.7,3.7"/></svg>
<svg class="ic" style="left:46px;top:1158px" width="30" height="29" viewBox="0 0 30 29"><path fill="#a9b4bc" d="M0,0H11.3L15.5,4.2H28V12H16V22H0Z"/><rect x="18.3" y="14.2" width="11.7" height="2" fill="#e0932e"/><rect x="18.3" y="18.3" width="11.7" height="2" fill="#e0932e"/><rect x="18.3" y="22.3" width="11.7" height="2" fill="#e0932e"/><rect x="18.3" y="26.3" width="11.7" height="2" fill="#e0932e"/></svg>
<div class="rt cj" style="left:84.7px;top:1152px">资源文件</div>
<svg class="ic" style="left:47.7px;top:1197.5px" width="16" height="24" viewBox="0 0 16 24"><path fill="none" stroke="#b0b0b0" stroke-width="2.35" d="M3.1,3.2L11.6,11.5L3.1,19.8"/></svg>
<svg class="ic" style="left:82px;top:1196.2px" width="28" height="22" viewBox="0 0 28 22"><path fill="#a9b4bc" d="M0,0H11.3L15.5,4.2H28V21.8H0Z"/></svg>
<div class="rt" style="left:120.7px;top:1190px">lib</div>
<svg class="ic" style="left:47.7px;top:1235.5px" width="16" height="24" viewBox="0 0 16 24"><path fill="none" stroke="#b0b0b0" stroke-width="2.35" d="M3.1,3.2L11.6,11.5L3.1,19.8"/></svg>
<svg class="ic" style="left:82px;top:1234.2px" width="28" height="22" viewBox="0 0 28 22"><path fill="#a9b4bc" d="M0,0H11.3L15.5,4.2H28V21.8H0Z"/></svg>
<div class="rt" style="left:120.7px;top:1228px">META-INF</div>
<svg class="ic" style="left:47.7px;top:1273.5px" width="16" height="24" viewBox="0 0 16 24"><path fill="none" stroke="#b0b0b0" stroke-width="2.35" d="M3.1,3.2L11.6,11.5L3.1,19.8"/></svg>
<svg class="ic" style="left:82px;top:1272.2px" width="28" height="22" viewBox="0 0 28 22"><path fill="#a9b4bc" d="M0,0H11.3L15.5,4.2H28V21.8H0Z"/></svg>
<div class="rt" style="left:120.7px;top:1266px">res</div>
<svg class="ic" style="left:82px;top:1304.2px" width="30" height="34" viewBox="0 0 30 34"><path fill="#a9b4bc" d="M13.5,3.9H23.6V17.6H3.6V13.4H13.5Z"/><path fill="#adb7be" d="M3.8,11.5H11.5V4.1Z"/><rect x="0" y="20" width="30" height="13.9" fill="#cdb9f6"/><text x="2.9" y="31.8" font-family="Liberation Sans,sans-serif" font-weight="bold" font-size="13" letter-spacing="0.5" fill="#4b3f63">MF</text></svg>
<div class="rt" style="left:120.7px;top:1304px">AndroidManifest.xml</div>
<svg class="ic" style="left:82px;top:1342.2px" width="30" height="34" viewBox="0 0 30 34"><path fill="#a9b4bc" d="M13.5,3.9H23.6V17.6H3.6V13.4H13.5Z"/><path fill="#adb7be" d="M3.8,11.5H11.5V4.1Z"/><rect x="0" y="20" width="30" height="13.9" fill="#7cc9e8"/><text x="4.0" y="31.8" font-family="Liberation Sans,sans-serif" font-weight="bold" font-size="13" letter-spacing="0.5" fill="#2f4a5a">J</text></svg>
<div class="rt" style="left:120.7px;top:1342px">classes.dex</div>
<svg class="ic" style="left:47.7px;top:1387.5px" width="16" height="24" viewBox="0 0 16 24"><path fill="none" stroke="#b0b0b0" stroke-width="2.35" d="M3.1,3.2L11.6,11.5L3.1,19.8"/></svg>
<svg class="ic" style="left:82px;top:1386px" width="30" height="28" viewBox="0 0 30 28"><path fill="#a9b4bc" d="M0,0H11.3L15.5,4.2H28V8.4H24.4V12.4H18.4V16.3H12.4V21.8H0Z"/><rect x="14" y="17.9" width="4" height="9.9" fill="#e8632a"/><rect x="20.2" y="14" width="3.8" height="13.8" fill="#f0a73a"/><rect x="26.1" y="10" width="3.9" height="17.8" fill="#5eb040"/></svg>
<div class="rt" style="left:120.7px;top:1380px">resources.arsc</div>
<svg class="ic" style="left:50px;top:1422px" width="27" height="30" viewBox="0 0 27 30"><path fill="#b7c0c7" d="M0.1,7.7H8V0.2Z"/><path fill="#a9b4bc" d="M10.2,0H19.8V5.4L16.1,6.4V3.6H11.8V11.2H10.2Z"/><path fill="#a9b4bc" d="M0.1,10.2H11.9V11.6H3.7V24.2H11.9V27.9H0.1Z"/><rect x="6.3" y="14.1" width="5.6" height="1.7" fill="#a9b4bc"/><rect x="6.3" y="18.1" width="5.6" height="1.7" fill="#a9b4bc"/><circle cx="20" cy="13.9" r="6.1" fill="#3fb5e0"/><circle cx="20" cy="13.9" r="2.1" fill="#fff"/><rect x="18.1" y="19" width="3.9" height="10.9" fill="#3fb5e0"/><rect x="14" y="24.2" width="4.5" height="3.7" fill="#3fb5e0"/></svg>
<div class="rt" style="left:84.7px;top:1418px">APK signature</div>
<svg class="ic" style="left:46.1px;top:1460.1px" width="28" height="28" viewBox="0 0 28 28"><rect x="1.95" y="1.95" width="24" height="24" fill="none" stroke="#6e6e6e" stroke-width="3.7"/><path fill="#6e6e6e" d="M6.2,16.2H10.1V8.1H13.8V13.9H18.2V10.2H21.9V19.9H6.2Z"/></svg>
<div class="rt" style="left:84.7px;top:1456px">Summary</div>
<svg class="abs" style="left:0;top:190px" width="240" height="1010" viewBox="0 190 240 1010"><rect x="13.75" y="199.95" width="189.5" height="33.2" fill="none" stroke="#e81a2b" stroke-width="3.5"/><rect x="33.95" y="1145.95" width="187.3" height="41.1" fill="none" stroke="#e81a2b" stroke-width="3.5"/></svg>
<svg class="abs" style="left:1342px;top:1112px" width="10" height="36" viewBox="0 0 10 36"><circle cx="5" cy="9" r="2.95" fill="#b2b2b2"/><circle cx="5" cy="19" r="2.95" fill="#b2b2b2"/><circle cx="5" cy="29" r="2.95" fill="#b2b2b2"/></svg>
<svg class="ic" style="left:1378px;top:178px" width="32" height="32" viewBox="0 0 32 32"><circle cx="14" cy="14" r="14" fill="#88cfea"/><path fill="none" stroke="#3d4a55" stroke-width="2.15" d="M17.7,10.7A4.9,4.9 0 1 0 17.7,17.1"/><circle cx="24" cy="23.7" r="7.6" fill="#fff"/><circle cx="24" cy="23.7" r="6" fill="#5fb13f"/></svg>
<div class="tab" style="left:1415.8px">CryptoService</div>
<svg class="abs" style="left:1624px;top:182px" width="20" height="20" viewBox="0 0 20 20"><path stroke="#b5bcc0" stroke-width="2.2" fill="none" d="M3,3.2L17.2,17.4M17.2,3.2L3,17.4"/></svg>
<svg class="ic" style="left:1700.4px;top:174.2px" width="30" height="34" viewBox="0 0 30 34"><path fill="#a9b4bc" d="M13.5,3.9H23.6V17.6H3.6V13.4H13.5Z"/><path fill="#adb7be" d="M3.8,11.5H11.5V4.1Z"/><rect x="0" y="20" width="30" height="13.9" fill="#cdb9f6"/><text x="2.9" y="31.8" font-family="Liberation Sans,sans-serif" font-weight="bold" font-size="13" letter-spacing="0.5" fill="#4b3f63">MF</text></svg>
<div class="tab" style="left:1738.6px">AndroidManifest.xml</div>
<svg class="abs" style="left:2029.6px;top:182px" width="20" height="20" viewBox="0 0 20 20"><path stroke="#b5bcc0" stroke-width="2.2" fill="none" d="M3,3.2L17.2,17.4M17.2,3.2L3,17.4"/></svg>
<div class="abs" style="left:1352px;top:224.3px;width:2488px;height:1.8px;background:#c4c4c4"></div>
<div class="ed"></div>
<div class="abs" style="left:1352px;top:226px;width:2488px;height:1.8px;background:#82acd6"></div>
<div class="abs" style="left:1352.3px;top:226px;width:1.8px;height:1808px;background:#82acd6"></div>
<div class="abs" style="left:3838.2px;top:226px;width:1.8px;height:1808px;background:#82acd6"></div>
<div class="abs" style="left:1352px;top:2032.7px;width:2488px;height:1.9px;background:#8fb4dc"></div>
<div class="abs" style="left:1352px;top:219.8px;width:322px;height:6.3px;background:#3e80c8"></div>
<div class="abs" style="left:1352px;top:2032.7px;width:100px;height:7.3px;background:#3e80c8"></div>
<div class="abs" style="left:3818.3px;top:227.8px;width:19.9px;height:1805px;background:#f5f5f5"></div>
<div class="abs" style="left:3822px;top:232px;width:12px;height:850px;border-radius:6px;background:#dbdbdb"></div>
<div class="abs" style="left:1416px;top:227.8px;width:2.1px;height:1805px;background:#058205"></div>
<div class="cl" style="top:232.6px"><span class="k">package</span> com.mwr.example.sieve;</div>
<div class="cl" style="top:292.6px"><span class="k">import</span> android.app.Service;</div>
<div class="cl" style="top:322.6px"><span class="k">import</span> android.content.Intent;</div>
<div class="cl" style="top:352.6px"><span class="k">import</span> android.os.Bundle;</div>
<div class="cl" style="top:382.6px"><span class="k">import</span> android.os.Handler;</div>
<div class="cl" style="top:412.6px"><span class="k">import</span> android.os.HandlerThread;</div>
<div class="cl" style="top:442.6px"><span class="k">import</span> android.os.IBinder;</div>
<div class="cl" style="top:472.6px"><span class="k">import</span> android.os.Looper;</div>
<div class="cl" style="top:502.6px"><span class="k">import</span> android.os.Message;</div>
<div class="cl" style="top:532.6px"><span class="k">import</span> android.os.Messenger;</div>
<div class="cl" style="top:562.6px"><span class="k">import</span> android.os.RemoteException;</div>
<div class="cl" style="top:592.6px"><span class="k">import</span> android.util.Log;</div>
<div class="cl" style="top:652.6px"><span class="c">/* loaded from: classes.dex */</span></div>
<div class="abs" style="left:1418px;top:682.8px;width:2400px;height:29.6px;background:#ffffaa"></div>
<div class="ln" style="top:683.3px;color:#dc009c">28</div>
<div class="cl" style="top:682.6px"><span class="k">public</span> <span class="k">class</span> <span class="m">CryptoService</span> <span class="k">extends</span> Service <span class="p">{</span></div>
<div class="cl" style="top:712.6px">    <span class="k">public</span> <span class="k">static</span> <span class="k">final</span> <span class="f">String</span> KEY <span class="o">=</span> <span class="s">"com.mwr.example.sieve.KEY"</span>;</div>
<div class="cl" style="top:742.6px">    <span class="k">public</span> <span class="k">static</span> <span class="k">final</span> <span class="d">int</span> MSG_DECRYPT <span class="o">=</span> <span class="n">13476</span>;</div>
<div class="cl" style="top:772.6px">    <span class="k">public</span> <span class="k">static</span> <span class="k">final</span> <span class="d">int</span> MSG_ENCRYPT <span class="o">=</span> <span class="n">3452</span>;</div>
<div class="cl" style="top:802.6px">    <span class="k">public</span> <span class="k">static</span> <span class="k">final</span> <span class="f">String</span> PASSWORD <span class="o">=</span> <span class="s">"com.mwr.example.sieve.PASSWORD"</span>;</div>
<div class="cl" style="top:832.6px">    <span class="k">public</span> <span class="k">static</span> <span class="k">final</span> <span class="f">String</span> RESULT <span class="o">=</span> <span class="s">"com.mwr.example.sieve.RESULT"</span>;</div>
<div class="cl" style="top:862.6px">    <span class="k">public</span> <span class="k">static</span> <span class="k">final</span> <span class="f">String</span> STRING <span class="o">=</span> <span class="s">"com.mwr.example.sieve.STRING"</span>;</div>
<div class="cl" style="top:892.6px">    <span class="k">private</span> <span class="k">static</span> <span class="k">final</span> <span class="f">String</span> TAG <span class="o">=</span> <span class="s">"m_<span class="m">CryptoService</span>"</span>;</div>
<div class="cl" style="top:922.6px">    <span class="k">private</span> Messenger responseHandler;</div>
<div class="cl" style="top:952.6px">    <span class="k">private</span> Messenger serviceHandler;</div>
<div class="cl" style="top:982.6px">    <span class="k">private</span> Looper serviceLooper;</div>
<div class="cl" style="top:1042.6px">    <span class="k">private</span> <span class="k">native</span> <span class="f">String</span> runNDKdecrypt<span class="p">(</span><span class="f">String</span> str, <span class="d">byte</span><span class="p">[</span><span class="p">]</span> bArr<span class="p">)</span>;</div>
<div class="cl" style="top:1102.6px">    <span class="k">private</span> <span class="k">native</span> <span class="d">byte</span><span class="p">[</span><span class="p">]</span> runNDKencrypt<span class="p">(</span><span class="f">String</span> str, <span class="f">String</span> str2<span class="p">)</span>;</div>
<div class="cl" style="top:1162.6px">    <span class="k">static</span> <span class="p">{</span></div>
<div class="ln" style="top:1193.3px">40</div>
<div class="cl" style="top:1192.6px">        <span class="f">System</span>.loadLibrary<span class="p">(</span><span class="s">"encrypt"</span><span class="p">)</span>;</div>
<div class="ln" style="top:1223.3px">41</div>
<div class="cl" style="top:1222.6px">        <span class="f">System</span>.loadLibrary<span class="p">(</span><span class="s">"decrypt"</span><span class="p">)</span>;</div>
<div class="cl" style="top:1252.6px">    <span class="p">}</span></div>
<div class="cl" style="top:1312.6px">    <span class="a">@Override</span> <span class="c">// android.app.Service</span></div>
<div class="ln" style="top:1343.3px">45</div>
<div class="cl" style="top:1342.6px">    <span class="k">public</span> <span class="k">void</span> onCreate<span class="p">(</span><span class="p">)</span> <span class="p">{</span></div>
<div class="ln" style="top:1373.3px">46</div>
<div class="cl" style="top:1372.6px">        HandlerThread thread <span class="o">=</span> <span class="k">new</span> HandlerThread<span class="p">(</span>TAG, <span class="n">10</span><span class="p">)</span>;</div>
<div class="ln" style="top:1403.3px">47</div>
<div class="cl" style="top:1402.6px">        thread.start<span class="p">(</span><span class="p">)</span>;</div>
<div class="ln" style="top:1433.3px">48</div>
<div class="cl" style="top:1432.6px">        <span class="k">this</span>.serviceLooper <span class="o">=</span> thread.getLooper<span class="p">(</span><span class="p">)</span>;</div>
<div class="ln" style="top:1463.3px">49</div>
<div class="cl" style="top:1462.6px">        <span class="k">this</span>.serviceHandler <span class="o">=</span> <span class="k">new</span> Messenger<span class="p">(</span><span class="k">new</span> MessageHandler<span class="p">(</span><span class="k">this</span>.serviceLooper<span class="p">)</span><span class="p">)</span>;</div>
<div class="cl" style="top:1492.6px">    <span class="p">}</span></div>
<div class="cl" style="top:1552.6px">    <span class="a">@Override</span> <span class="c">// android.app.Service</span></div>
<div class="ln" style="top:1583.3px">54</div>
<div class="cl" style="top:1582.6px">    <span class="k">public</span> IBinder onBind<span class="p">(</span>Intent arg0<span class="p">)</span> <span class="p">{</span></div>
<div class="ln" style="top:1613.3px">55</div>
<div class="cl" style="top:1612.6px">        <span class="k">return</span> <span class="k">this</span>.serviceHandler.getBinder<span class="p">(</span><span class="p">)</span>;</div>
<div class="cl" style="top:1642.6px">    <span class="p">}</span></div>
<div class="cl" style="top:1702.6px">    <span class="c">/* JADX INFO: Access modifiers changed from: private */</span></div>
<div class="ln" style="top:1733.3px">60</div>
<div class="cl" style="top:1732.6px">    <span class="k">public</span> <span class="d">byte</span><span class="p">[</span><span class="p">]</span> encrypt<span class="p">(</span><span class="f">String</span> key, <span class="f">String</span> string<span class="p">)</span> <span class="p">{</span></div>
<div class="ln" style="top:1763.3px">61</div>
<div class="cl" style="top:1762.6px">        <span class="d">byte</span><span class="p">[</span><span class="p">]</span> out <span class="o">=</span> <span class="k">null</span>;</div>
<div class="cl" style="top:1792.6px">        <span class="k">try</span> <span class="p">{</span></div>
<div class="ln" style="top:1823.3px">63</div>
<div class="cl" style="top:1822.6px">            <span class="d">byte</span><span class="p">[</span><span class="p">]</span> out2 <span class="o">=</span> runNDKencrypt<span class="p">(</span>key, string<span class="p">)</span>;</div>
<div class="ln" style="top:1853.3px">68</div>
<div class="cl" style="top:1852.6px">            <span class="k">return</span> out2;</div>
<div class="cl" style="top:1882.6px">        <span class="p">}</span> <span class="k">catch</span> <span class="p">(</span><span class="f">Exception</span> e<span class="p">)</span> <span class="p">{</span></div>
<div class="ln" style="top:1913.3px">65</div>
<div class="cl" style="top:1912.6px">            Log.e<span class="p">(</span>TAG, <span class="s">"ERROR: Error during encrytion: "</span> <span class="o">+</span> e.getMessage<span class="p">(</span><span class="p">)</span><span class="p">)</span>;</div>
<div class="ln" style="top:1943.3px">68</div>
<div class="cl" style="top:1942.6px">            <span class="k">return</span> out;</div>
<div class="cl" style="top:1972.6px">        <span class="p">}</span></div>
<div class="cl" style="top:2002.6px">    <span class="p">}</span></div>
<svg class="abs" style="left:2660px;top:1930px" width="1160" height="104" viewBox="2660 1930 1160 104"><g font-family="Liberation Serif,serif" font-size="76.5" fill="none" stroke="#cacaca" stroke-width="1" text-anchor="middle"><text transform="translate(2721.8,2011) scale(1.3,1)">i</text><text transform="translate(2776.8,2011) scale(1.3,1)">n</text><text transform="translate(2831.8,2011) scale(1.3,1)">i</text><text transform="translate(2877.6,2011) scale(1.3,1)">t</text><text transform="translate(2925.7,2011) scale(1.3,1)">s</text><text transform="translate(2978.4,2011) scale(1.3,1)">e</text><text transform="translate(3028.8,2011) scale(1.3,1)">c</text><text transform="translate(3136.4,2011) scale(1.3,1)">b</text><text transform="translate(3186.8,2011) scale(1.3,1)">l</text><text transform="translate(3232.6,2011) scale(1.3,1)">o</text><text transform="translate(3285.3,2011) scale(1.3,1)">g</text><text transform="translate(3332,2011) scale(1.3,1)">.</text><text transform="translate(3374.6,2011) scale(1.3,1)">g</text><text transform="translate(3457,2011) scale(1.3,1)">m</text><text transform="translate(3537.2,2011) scale(1.3,1)">7</text><text transform="translate(3580.8,2011) scale(1.3,1)">.</text><text transform="translate(3624.3,2011) scale(1.3,1)">o</text><text transform="translate(3681.5,2011) scale(1.3,1)">r</text><text transform="translate(3734.2,2011) scale(1.3,1)">g</text></g></svg>
<svg class="abs" style="left:0;top:2046px" width="1000" height="16" viewBox="0 2046 1000 16"><rect x="76" y="2053" width="37" height="6.5" rx="3" fill="#fff"/><rect x="138" y="2053" width="36.5" height="6.5" rx="3" fill="#fff"/><rect x="292" y="2053" width="37" height="6.5" rx="3" fill="#fff"/><rect x="415" y="2053" width="36.6" height="6.5" rx="3" fill="#fff"/><rect x="477" y="2053" width="36" height="6.5" rx="3" fill="#fff"/><rect x="539" y="2053" width="36" height="6.5" rx="3" fill="#fff"/><rect x="631" y="2053" width="36" height="6.5" rx="3" fill="#fff"/><rect x="752" y="2053" width="68" height="6.5" rx="3" fill="#fff"/><rect x="876" y="2053" width="98" height="6.5" rx="3" fill="#fff"/></svg>
<div class="bt" style="left:9.6px;top:2053.4px;font-size:26.2px">问题:</div>
<svg class="abs" style="left:1203px;top:2059px" width="30" height="26" viewBox="0 0 30 26"><path fill="#f4af3d" d="M14.6,1.2L28,24H1.2Z"/><rect x="13.3" y="9" width="2.8" height="8.4" fill="#fff"/><rect x="13.3" y="19" width="2.8" height="2.9" fill="#fff"/></svg>
<div class="bt" style="left:1241px;top:2052.5px;font-size:26.2px">27 警告</div>
<div class="bt" style="left:1376px;top:2049px;font-size:25.6px">代码</div>
<div class="bt" style="left:1476px;top:2049px">Smali</div>
<div class="bt" style="left:1588px;top:2049px">Simple</div>
<div class="bt" style="left:1716.2px;top:2049px">Fallback</div>
<div class="abs" style="left:1944.2px;top:2052px;width:27.8px;height:27.8px;background:#fff;border:2.2px solid #b2b2b2;border-radius:5.5px"></div>
<div class="bt" style="left:1980px;top:2046.9px;font-size:26.7px">Split view</div>
<svg class="abs" style="left:1904px;top:2098px" width="36" height="12" viewBox="0 0 36 12"><circle cx="7" cy="6.6" r="2.7" fill="#ababab"/><circle cx="17.2" cy="6.6" r="2.7" fill="#ababab"/><circle cx="27.4" cy="6.6" r="2.7" fill="#ababab"/></svg>
</div></body></html>
